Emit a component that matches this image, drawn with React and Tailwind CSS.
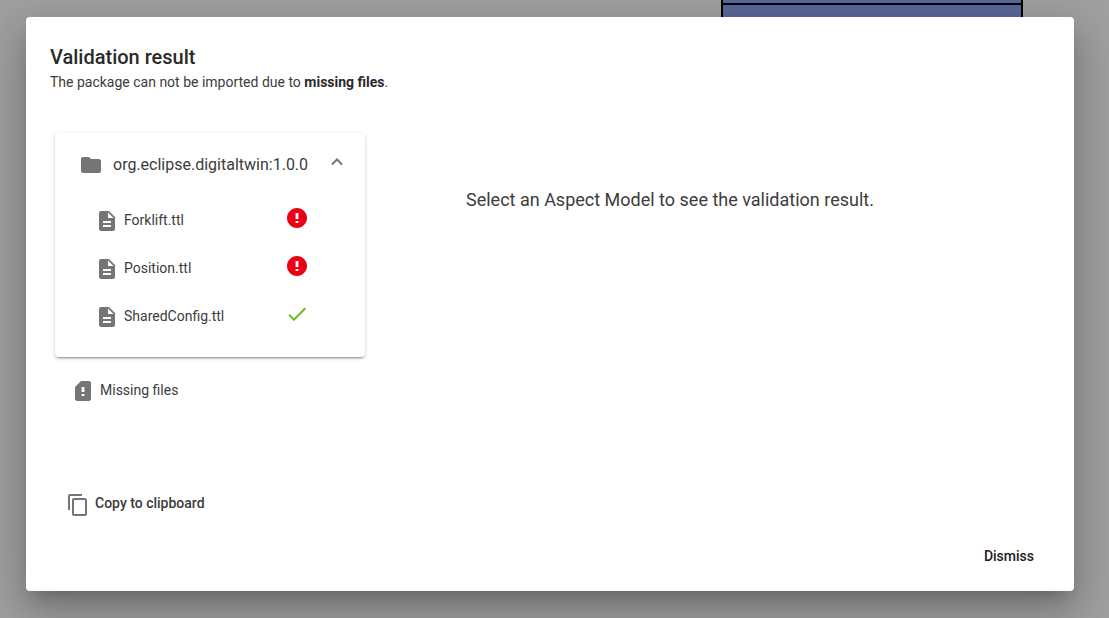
const paths = {
  folder: "M10 4H4c-1.1 0-1.99.9-1.99 2L2 18c0 1.1.9 2 2 2h16c1.1 0 2-.9 2-2V8c0-1.1-.9-2-2-2h-8l-2-2z",
  file: "M14 2H6c-1.1 0-1.99.9-1.99 2L4 20c0 1.1.89 2 1.99 2H18c1.1 0 2-.9 2-2V8l-6-6zm2 16H8v-2h8v2zm0-4H8v-2h8v2zm-3-5V3.5L18.5 9H13z",
  error: "M12 2C6.48 2 2 6.48 2 12s4.48 10 10 10 10-4.48 10-10S17.52 2 12 2zm1.4 15h-2.8v-2h2.8v2zm0-4h-2.8V7h2.8v6z",
  check: "M9 16.17 4.83 12l-1.42 1.41L9 19 21 7l-1.41-1.41z",
  alert: "M18 2h-8L4.02 8 4 20c0 1.1.9 2 2 2h12c1.1 0 2-.9 2-2V4c0-1.1-.9-2-2-2zm-4.6 15h-2.8v-2h2.8v2zm0-4h-2.8V8h2.8v5z",
  copy: "M16 1H4c-1.1 0-2 .9-2 2v14h2V3h12V1zm3 4H8c-1.1 0-2 .9-2 2v14c0 1.1.9 2 2 2h11c1.1 0 2-.9 2-2V7c0-1.1-.9-2-2-2zm0 16H8V7h11v14z",
};

function Icon({ name, className = "text-[#757575]" }) {
  return (
    <svg viewBox="0 0 24 24" fill="currentColor" aria-hidden="true" className={`size-6 shrink-0 ${className}`}>
      <path d={paths[name]} />
    </svg>
  );
}

const files = [
  { name: "Forklift.ttl", valid: false },
  { name: "Position.ttl", valid: false },
  { name: "SharedConfig.ttl", valid: true },
];

function NamespacePanel() {
  return (
    <section className="mx-[5px] rounded bg-white pb-4 shadow-[0_3px_1px_-2px_rgba(0,0,0,0.2),0_2px_2px_0_rgba(0,0,0,0.14),0_1px_5px_0_rgba(0,0,0,0.12)]">
      <button type="button" aria-expanded="true" className="flex h-16 w-full items-center pr-[22px] pl-6 text-left">
        <Icon name="folder" />
        <span className="ml-2.5 flex-1 text-base">org.eclipse.digitaltwin:1.0.0</span>
        <svg viewBox="0 0 12 8" fill="none" stroke="#757575" strokeWidth="2" aria-hidden="true" className="mb-1.5 h-2 w-3">
          <path d="M1 6.5 6 1.5l5 5" />
        </svg>
      </button>
      <ul>
        {files.map((file) => (
          <li key={file.name}>
            <button type="button" className="flex h-12 w-full items-center pr-14 pl-10 text-left text-sm">
              <Icon name="file" />
              <span className="ml-[5px] flex-1 pb-0.5">{file.name}</span>
              <span className="pb-1.5">
                {file.valid ? (
                  <Icon name="check" className="text-[#6ebe1e]" />
                ) : (
                  <Icon name="error" className="text-[#eb0014]" />
                )}
              </span>
            </button>
          </li>
        ))}
      </ul>
    </section>
  );
}

export default function App() {
  return (
    <div className="relative min-h-screen bg-[#a0a0a0] font-[Roboto,sans-serif] text-[#3c3c3c]">
      <div className="absolute top-0 right-[86px] h-12 w-[302px] border-x-2 border-black bg-[#5a689b]">
        <div className="mt-[3px] h-0.5 bg-black" />
      </div>
      <div className="relative flex min-h-screen pt-[17px] pr-[35px] pb-[27px] pl-[26px]">
        <div
          role="dialog"
          aria-labelledby="dialog-title"
          className="flex flex-1 flex-col rounded bg-white px-6 pt-6 pb-[17px] shadow-[0_11px_15px_-7px_rgba(0,0,0,0.2),0_24px_38px_3px_rgba(0,0,0,0.14),0_9px_46px_8px_rgba(0,0,0,0.12)]"
        >
          <header>
            <h1 id="dialog-title" className="text-xl leading-8 font-medium text-[#2a2a2a]">
              Validation result
            </h1>
            <p className="text-sm leading-[18px]">
              The package can not be imported due to <b className="font-bold text-[#2a2a2a]">missing files</b>.
            </p>
          </header>
          <main className="mt-[42px] flex flex-1">
            <div className="flex w-80 shrink-0 flex-col items-stretch">
              <NamespacePanel />
              <button type="button" className="mt-2.5 flex h-12 items-center gap-[5px] pl-[21px] text-left text-sm">
                <Icon name="alert" />
                <span className="pb-0.5">Missing files</span>
              </button>
              <button type="button" className="mt-[66px] flex h-12 items-center gap-[5px] self-start px-4 text-sm font-medium">
                <Icon name="copy" />
                <span className="pb-1">Copy to clipboard</span>
              </button>
            </div>
            <p className="mt-[53px] flex-1 pl-24 text-lg">
              Select an Aspect Model to see the validation result.
            </p>
          </main>
          <footer className="flex justify-end">
            <button type="button" className="h-9 px-4 text-sm font-medium text-[#212121]">
              Dismiss
            </button>
          </footer>
        </div>
      </div>
    </div>
  );
}
